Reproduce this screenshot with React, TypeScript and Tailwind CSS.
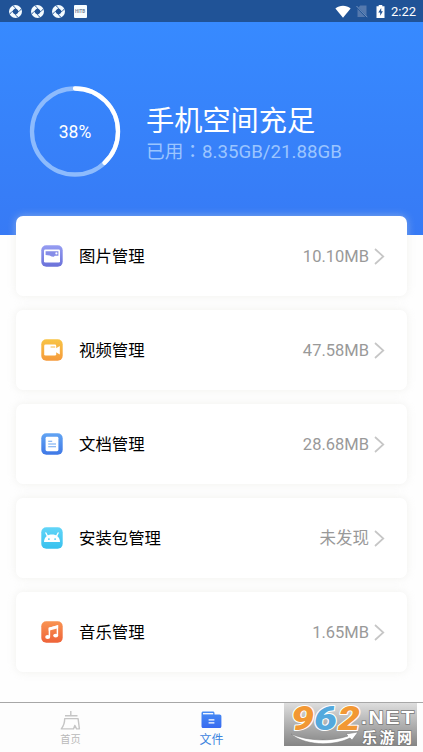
import type { ReactNode } from 'react'

type Item = {
  title: string
  value: string
  icon: ReactNode
}

const Tile = ({ id, from, to, children }: { id: string; from: string; to: string; children: ReactNode }) => (
  <svg width="22" height="22" viewBox="0 0 22 22">
    <defs>
      <linearGradient id={id} x1="0" y1="0" x2="0" y2="1">
        <stop offset="0" stopColor={from} />
        <stop offset="1" stopColor={to} />
      </linearGradient>
    </defs>
    <rect x="0.3" y="0.3" width="21.4" height="21.4" rx="5" fill={`url(#${id})`} />
    {children}
  </svg>
)

const items: Item[] = [
  {
    title: '图片管理',
    value: '10.10MB',
    icon: (
      <Tile id="pic" from="#969df2" to="#6a71d9">
        <rect x="3" y="4.6" width="16" height="12.8" rx="1.2" fill="#fff" />
        <path d="M4.6 6.2h12.8v4.6h-3.6l-1 1-2.2-.2-2-1.2-4-.4z" fill="#868de8" />
        <circle cx="15.4" cy="8.4" r="1.1" fill="#fff" />
      </Tile>
    ),
  },
  {
    title: '视频管理',
    value: '47.58MB',
    icon: (
      <Tile id="video" from="#f8c445" to="#f59a3c">
        <rect x="3.2" y="5.6" width="12" height="11" rx="1.3" fill="#fff" />
        <path d="M14.6 9.6l4.2-2.6v8.4l-4.2-2.4z" fill="#fff" />
        <path d="M9.6 8h4.6" stroke="#f7b845" strokeWidth="1" />
      </Tile>
    ),
  },
  {
    title: '文档管理',
    value: '28.68MB',
    icon: (
      <Tile id="doc" from="#62a4f3" to="#3f78e6">
        <rect x="4.6" y="3.8" width="12.8" height="14.4" rx="1.4" fill="#fff" />
        <path d="M7.2 8.3h4M7.2 11h7.8M7.2 13.8h7.8" stroke="#6ba3ef" strokeWidth="1.1" />
      </Tile>
    ),
  },
  {
    title: '安装包管理',
    value: '未发现',
    icon: (
      <Tile id="apk" from="#62d5f8" to="#38c1ee">
        <path d="M6.5 9.2L4.9 6M15.5 9.2L17.1 6" stroke="#fff" strokeWidth="1.4" strokeLinecap="round" fill="none" />
        <path d="M3 14.9c.2-4.8 3.4-7.4 8-7.4s7.8 2.6 8 7.4z" fill="#fff" />
        <circle cx="7.9" cy="12.1" r="0.9" fill="#4accf3" />
        <circle cx="14.1" cy="12.1" r="0.9" fill="#4accf3" />
      </Tile>
    ),
  },
  {
    title: '音乐管理',
    value: '1.65MB',
    icon: (
      <Tile id="music" from="#f99452" to="#ee6339">
        <path d="M8.4 15.8V7.3l8-2.2v9.2" stroke="#fff" strokeWidth="1.5" fill="none" />
        <path d="M7.7 6.7l9.4-2.5v3l-9.4 2.5z" fill="#fff" />
        <ellipse cx="6.7" cy="16" rx="2.5" ry="1.9" fill="#fff" />
        <ellipse cx="14.7" cy="14.6" rx="2.5" ry="1.9" fill="#fff" />
      </Tile>
    ),
  },
]

const Shutter = () => (
  <svg width="13" height="13" viewBox="0 0 13 13">
    <circle cx="6.5" cy="6.5" r="4.5" fill="none" stroke="#f3fbff" strokeWidth="4" />
    <path d="M6.5 3L10 6.5 6.5 10 3 6.5z" fill="#205397" />
    <path d="M6.5 3L3.8.6M10 6.5l2.4-2.7M6.5 10l2.7 2.4M3 6.5L.6 9.2" stroke="#205397" strokeWidth="0.9" />
  </svg>
)

function StatusBar() {
  return (
    <div className="flex h-[22px] items-center justify-between bg-[#205397] pl-[9px] pr-[7px]">
      <div className="flex items-center gap-[8.5px]">
        <Shutter />
        <Shutter />
        <Shutter />
        <div className="flex h-[13px] w-[13px] items-center justify-center rounded-[1px] bg-[#f6fcff]">
          <span className="font-['Roboto',sans-serif] text-[4.5px] font-bold leading-[5px] text-[#74859b]">HITB</span>
        </div>
      </div>
      <div className="flex items-center">
        <svg width="16" height="13" viewBox="0 0 16 13">
          <path d="M.4 3.4C4.7-.2 11.3-.2 15.6 3.4L8 12.7z" fill="#fff" />
        </svg>
        <svg className="ml-[5px]" width="12" height="13" viewBox="0 0 12 13">
          <path d="M4.2.5H10.5V12H1.5V3.4z" fill="#5579ad" />
          <path d="M.4 1.4l10.8 11.2" stroke="#205397" strokeWidth="1.8" />
          <path d="M.5 1l10.8 11.2" stroke="#7b98c1" strokeWidth="1" />
        </svg>
        <svg className="ml-2" width="9" height="13" viewBox="0 0 9 13">
          <path d="M2.7 0h3.6v1.3H8.5V13H.5V1.3h2.2z" fill="#fff" />
          <path d="M5.2 3L2.3 7.6h1.9v3.2l2.7-4.6H5.2z" fill="#205397" />
        </svg>
        <span className="ml-[6px] font-['Roboto',sans-serif] text-[13px] leading-[15px] text-white">2:22</span>
      </div>
    </div>
  )
}

function Header() {
  const used = 38
  return (
    <div className="flex h-[213px] items-start bg-linear-to-b from-[#378aff] to-[#377af5] pl-[29px] pt-[63px]">
      <div className="grid h-[92px] w-[92px] place-items-center">
        <svg className="col-start-1 row-start-1" width="92" height="92" viewBox="0 0 92 92">
          <circle cx="46" cy="46.5" r="43" fill="none" stroke="#8dbbfd" strokeWidth="4.3" />
          <circle
            cx="46"
            cy="46.5"
            r="43"
            fill="none"
            stroke="#fff"
            strokeWidth="4.3"
            strokeLinecap="round"
            pathLength={100}
            strokeDasharray={`${used} 100`}
            transform="rotate(-90 46 46.5)"
          />
        </svg>
        <span className="col-start-1 row-start-1 pt-[2px] font-['Roboto',sans-serif] text-[17.5px] leading-[22px] text-white">{used}%</span>
      </div>
      <div className="ml-[25px] mt-4 whitespace-nowrap">
        <h1 className="font-['Noto_Sans_CJK_SC',sans-serif] text-[28.2px] leading-[36px] text-white">手机空间充足</h1>
        <p className="mt-[3px] font-['Roboto','Noto_Sans_CJK_TC',sans-serif] text-[18.7px] leading-[25px] text-[#9bc5ff]">已用：8.35GB/21.88GB</p>
      </div>
    </div>
  )
}

function Card({ item }: { item: Item }) {
  return (
    <div className="flex h-20 items-center rounded-[7px] bg-white pl-[25px] pr-[22px] shadow-[0_0_8px_rgba(225,225,218,0.45)]">
      {item.icon}
      <span className="ml-[16px] pt-[2px] text-[16.4px] leading-6 text-black">{item.title}</span>
      <span className="ml-auto pt-[2px] text-[16.5px] leading-6 text-[#999]">{item.value}</span>
      <svg className="ml-[5px]" width="11" height="17" viewBox="0 0 11 17" fill="none" stroke="#c6c6c6" strokeWidth="1.7">
        <path d="M1 1l8.3 7.5L1 16" />
      </svg>
    </div>
  )
}

function TabBar() {
  return (
    <div className="mt-[30px] grid h-[50px] grid-cols-3 border-t border-[#a7a7a7] bg-[#fdfdfd] font-['Noto_Sans_CJK_SC',sans-serif]">
      <div className="flex flex-col items-center pt-[8px]">
        <svg width="21" height="20" viewBox="0 0 21 20" fill="none" stroke="#c5c5c5" strokeWidth="1.4" strokeLinejoin="round">
          <path d="M10.8 0v4.6M5 4.8h12.5M4.7 7.6h13.4l1.3 10.3h-2.8l-1.8-3.5-1.3 3.5H1.3C3.7 15 4.7 11.6 4.7 7.6z" />
        </svg>
        <span className="mt-[1px] text-[10.2px] leading-[14px] text-[#b9b9b9]">首页</span>
      </div>
      <div className="flex flex-col items-center pt-[8px]">
        <svg width="21" height="18" viewBox="0 0 21 18">
          <defs>
            <linearGradient id="folder" x1="0" y1="0" x2="0" y2="1">
              <stop offset="0" stopColor="#478df4" />
              <stop offset="1" stopColor="#386af0" />
            </linearGradient>
          </defs>
          <path d="M.5 2.3C.5 1 1.2.5 2.3.5h9.5c1 0 1.7.6 1.7 1.7v1.2h5c1.1 0 1.9.7 1.9 1.8v10c0 1.2-.8 1.9-1.9 1.9H2.4c-1.100 0-1.900-.7-1.900-1.900z" fill="url(#folder)" />
          <path d="M2 2.7h10.2" stroke="#fff" strokeWidth="1.3" />
          <path d="M7.6 8.8h5.8M7.6 11.9h5.8" stroke="#fff" strokeWidth="1.2" />
        </svg>
        <span className="mt-[2px] text-[12px] leading-[16px] text-[#3c84df]">文件</span>
      </div>
    </div>
  )
}

function SiteBadge() {
  return (
    <div className="absolute left-[284px] top-[703px] h-[43px] w-[133px] bg-linear-to-b from-[#dedede] to-[#858585]">
      <svg width="133" height="43" viewBox="0 0 133 43" overflow="visible">
        <g
          fontFamily="Roboto, sans-serif"
          fontWeight="900"
          fontStyle="italic"
          fontSize="33"
          stroke="#fff"
          strokeWidth="2"
          strokeLinejoin="round"
          paintOrder="stroke"
        >
          <text x="7" y="27" textLength="23" lengthAdjust="spacingAndGlyphs" fill="#f29834">9</text>
          <text x="30" y="27" textLength="23" lengthAdjust="spacingAndGlyphs" fill="#54a9dd">6</text>
          <text x="54" y="27" textLength="22" lengthAdjust="spacingAndGlyphs" fill="#f29834">2</text>
        </g>
        <path d="M7 31c16 7 40 8 57 2l-2-2 12-2-6 8-2-2C48 44 20 42 7 31z" fill="#fff" stroke="#777" strokeWidth="0.5" />
        <g fill="#fff" stroke="#777" strokeWidth="1.300" paintOrder="stroke" fontWeight="700">
          <text x="77" y="21" fontFamily="Liberation Sans, sans-serif" fontSize="18" letterSpacing="1.5" textLength="55" lengthAdjust="spacingAndGlyphs">.NET</text>
          <text x="78" y="40" fontFamily="Noto Sans CJK SC, sans-serif" fontSize="15" textLength="50">乐游网</text>
        </g>
      </svg>
    </div>
  )
}

export default function App() {
  return (
    <div className="relative h-[752px] w-[423px] overflow-hidden bg-[#fefefe]">
      <StatusBar />
      <Header />
      <div className="-mt-[19px] flex flex-col gap-[14px] px-4 font-['Roboto','Noto_Sans_CJK_SC',sans-serif]">
        {items.map((i) => (
          <Card key={i.title} item={i} />
        ))}
      </div>
      <TabBar />
      <SiteBadge />
    </div>
  )
}
